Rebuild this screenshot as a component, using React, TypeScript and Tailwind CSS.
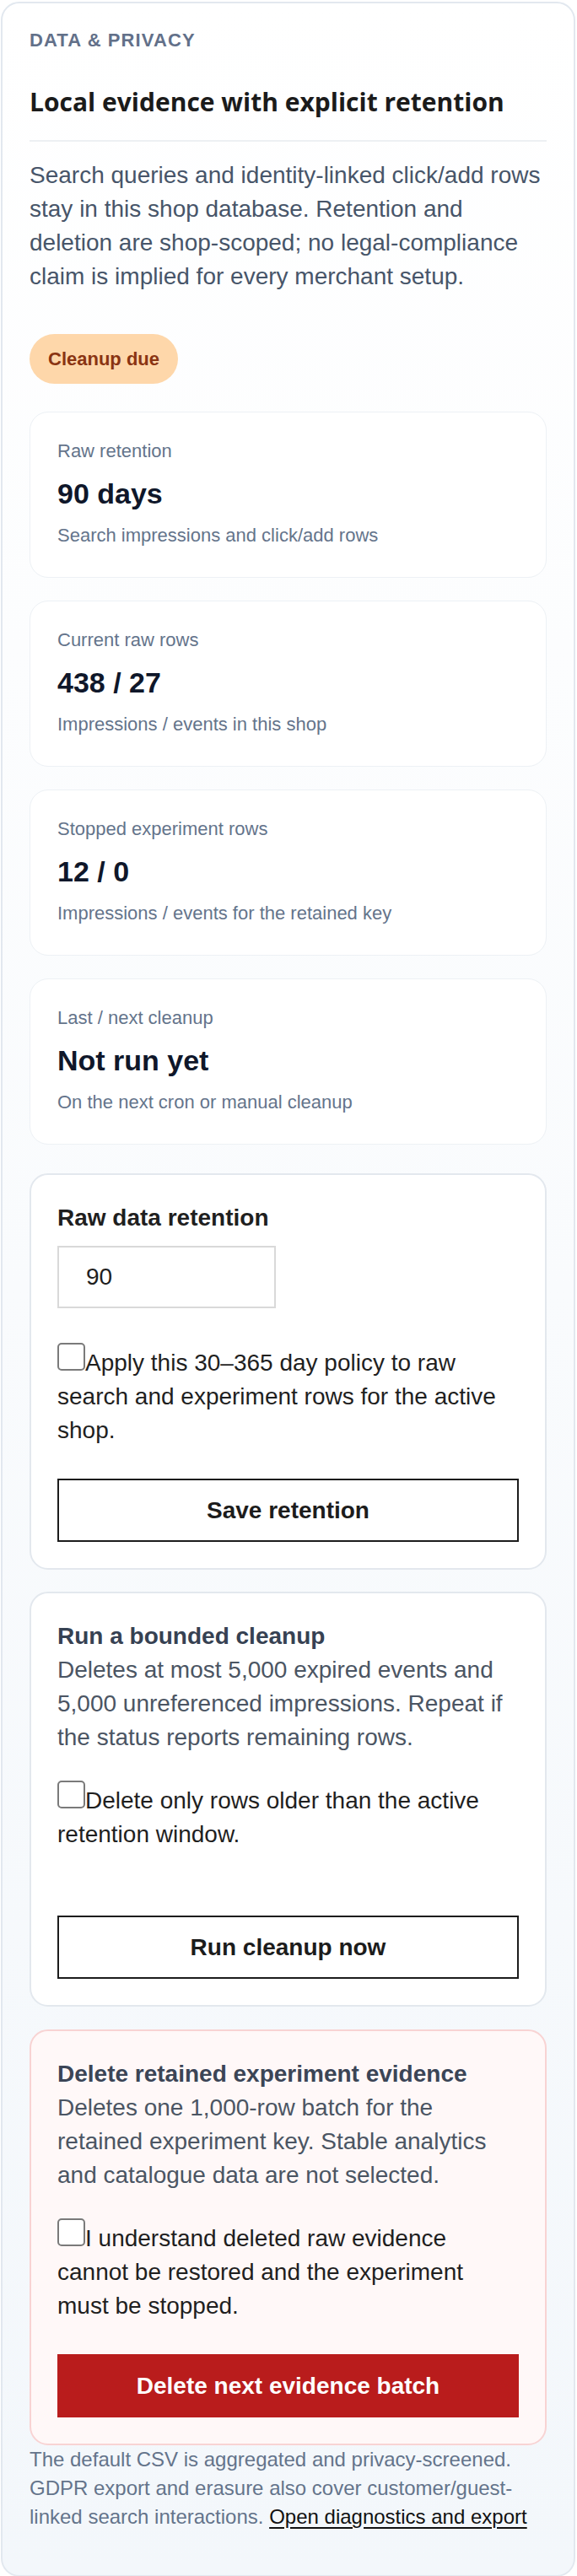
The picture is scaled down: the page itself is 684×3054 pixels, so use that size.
const stats = [
    { label: 'Raw retention', value: '90 days', note: 'Search impressions and click/add rows' },
    { label: 'Current raw rows', value: '438 / 27', note: 'Impressions / events in this shop' },
    { label: 'Stopped experiment rows', value: '12 / 0', note: 'Impressions / events for the retained key' },
    { label: 'Last / next cleanup', value: 'Not run yet', note: 'On the next cron or manual cleanup' },
];

const Box = () => (
    <span className="inline-block w-[33px] h-[33px] border-2 border-[#7a7a7a] rounded-[5px] bg-white align-baseline" />
);

const Consent = ({ children, className }: { children: React.ReactNode; className: string }) => (
    <label className={`block text-[28px] leading-[40px] text-[#1f1f1f] ${className}`}>
        <Box />
        {children}
    </label>
);

const App = () => {
    return (
        <div className="bg-white font-['Liberation_Sans',Arial,sans-serif]">
            <section className="ml-px mt-[2px] w-[681px] rounded-[22px] border-2 border-[#e2e8ef] bg-linear-to-b from-white to-[#f3f7fb] px-[32px] pt-[29px] pb-[52px]">
                <p className="text-[22px] leading-[30px] font-bold tracking-[1.1px] text-[#627089]">DATA &amp; PRIVACY</p>
                <h2 className="mt-[40px] pb-[27px] border-b-2 border-[#edf0f3] font-['Open_Sans',sans-serif] text-[30px] leading-[36px] font-bold text-[#1b1b1b]">
                    Local evidence with explicit retention
                </h2>
                <p className="mt-[20px] text-[28px] leading-[40px] text-[#475569]">
                    Search queries and identity-linked click/add rows stay in this shop database. Retention and
                    deletion are shop-scoped; no legal-compliance claim is implied for every merchant setup.
                </p>

                <div className="mt-[48px]">
                    <span className="inline-flex h-[59px] items-center rounded-full bg-[#fed7aa] px-[22px] text-[22px] font-bold text-[#8a3412]">
                        Cleanup due
                    </span>
                </div>

                {/* Status tiles */}
                <div className="mt-[33px] flex flex-col gap-[27px]">
                    {stats.map((s) => (
                        <div key={s.label} className="rounded-[22px] border border-[#edf1f5] bg-white px-[32px] pt-[31px] pb-[34px]">
                            <p className="text-[22px] leading-[30px] text-[#64748b]">{s.label}</p>
                            <p className="mt-[15px] text-[34px] leading-[40px] font-bold text-[#0f172a]">{s.value}</p>
                            <p className="mt-[15px] text-[22px] leading-[30px] text-[#64748b]">{s.note}</p>
                        </div>
                    ))}
                </div>

                {/* Retention form */}
                <div className="mt-[34px] rounded-[22px] border-2 border-[#e3e8ee] bg-white px-[31px] pt-[31px] pb-[31px]">
                    <p className="text-[28px] leading-[40px] font-bold text-[#1f1f1f]">Raw data retention</p>
                    <div className="mt-[13px] flex h-[74px] w-[259px] items-center border-2 border-[#d9d9d9] bg-white px-[32px] text-[28px] text-[#1f1f1f]">
                        90
                    </div>
                    <Consent className="mt-[41px]">
                        Apply this 30–365 day policy to raw search and experiment rows for the active shop.
                    </Consent>
                    <button className="mt-[37px] h-[75px] w-full border-2 border-[#1c1c1c] bg-white text-[28px] font-bold text-[#1c1c1c]">
                        Save retention
                    </button>
                </div>

                {/* Bounded cleanup */}
                <div className="mt-[26px] rounded-[22px] border-2 border-[#e3e8ee] bg-white px-[31px] pt-[31px] pb-[31px]">
                    <p className="text-[28px] leading-[40px] font-bold text-[#364152]">Run a bounded cleanup</p>
                    <p className="text-[28px] leading-[40px] text-[#4b5563]">
                        Deletes at most 5,000 expired events and 5,000 unreferenced impressions. Repeat if the status
                        reports remaining rows.
                    </p>
                    <Consent className="mt-[31px]">Delete only rows older than the active retention window.</Consent>
                    <button className="mt-[76px] h-[75px] w-full border-2 border-[#1c1c1c] bg-white text-[28px] font-bold text-[#1c1c1c]">
                        Run cleanup now
                    </button>
                </div>

                {/* Destructive */}
                <div className="mt-[27px] rounded-[22px] border-2 border-[#f8d3d3] bg-[#fff8f8] px-[31px] pt-[31px] pb-[31px]">
                    <p className="text-[28px] leading-[40px] font-bold text-[#3b4556]">Delete retained experiment evidence</p>
                    <p className="text-[28px] leading-[40px] text-[#4b5563]">
                        Deletes one 1,000-row batch for the retained experiment key. Stable analytics and catalogue
                        data are not selected.
                    </p>
                    <Consent className="mt-[31px]">
                        I understand deleted raw evidence cannot be restored and the experiment must be stopped.
                    </Consent>
                    <button className="mt-[37px] h-[75px] w-full bg-[#b91c1c] text-[28px] font-bold text-white">
                        Delete next evidence batch
                    </button>
                </div>

                <p className="text-[24px] leading-[34px] text-[#64748b]">
                    The default CSV is aggregated and privacy-screened. GDPR export and erasure also cover
                    customer/guest-linked search interactions.{' '}
                    <a href="#" className="text-[#111111] underline underline-offset-[4px]">
                        Open diagnostics and export
                    </a>
                </p>
            </section>
        </div>
    );
};

export default App;
